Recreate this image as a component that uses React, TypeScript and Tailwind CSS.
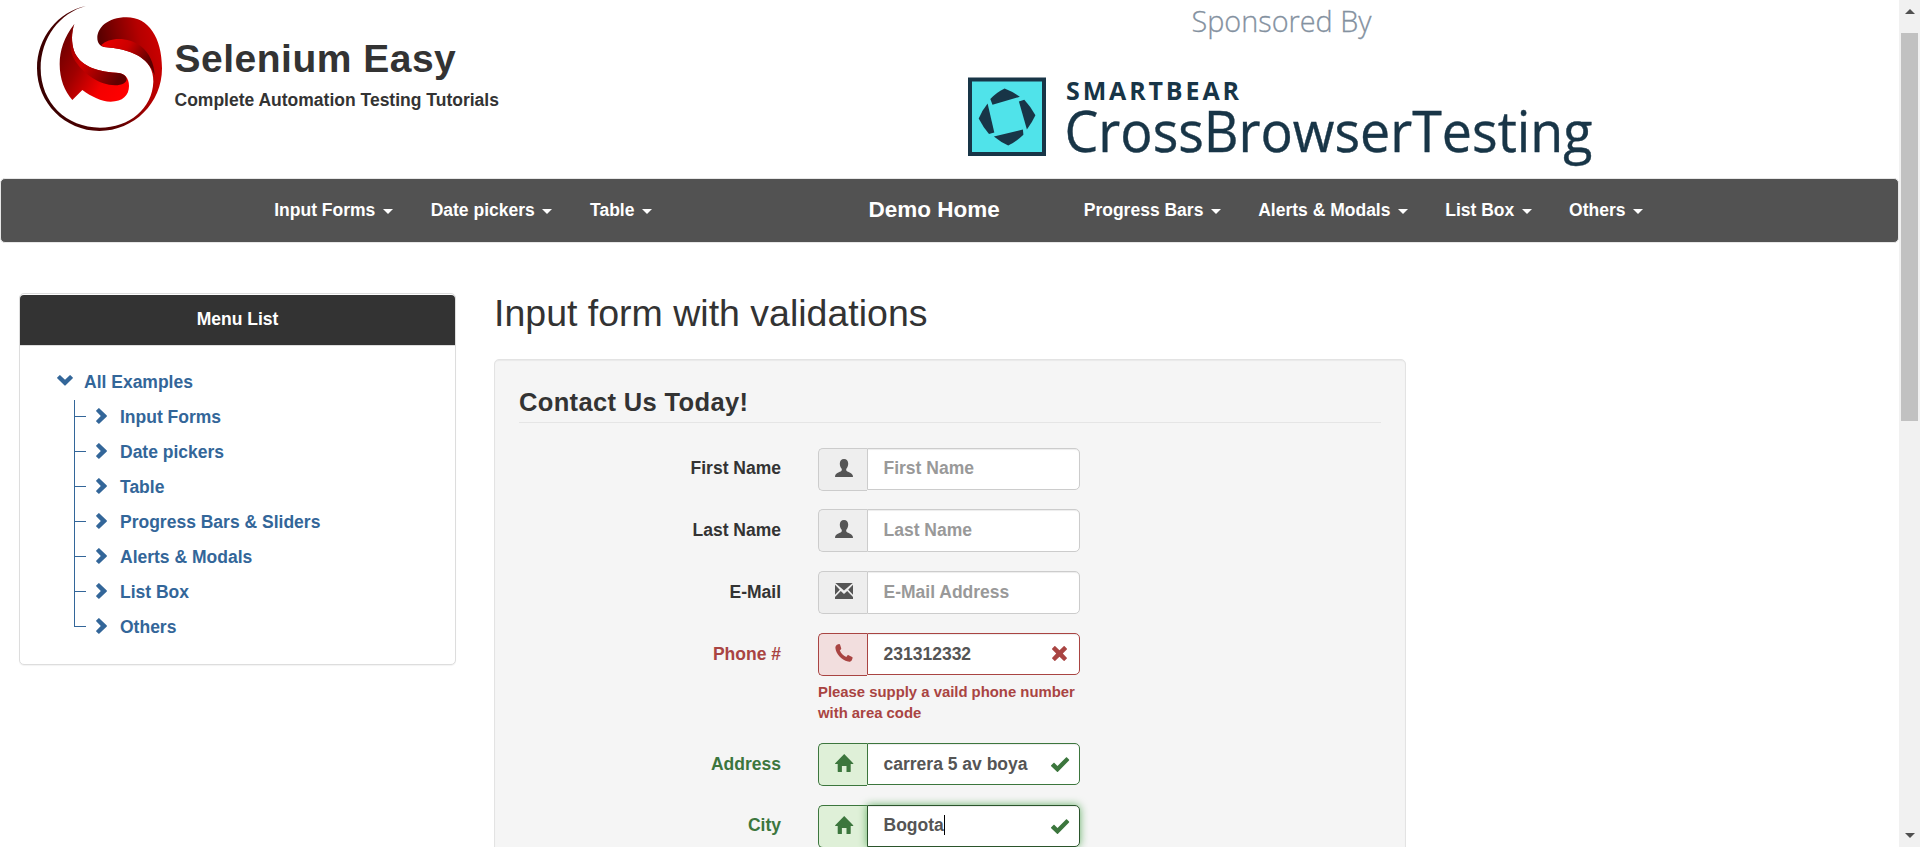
import React from "react";

type Tone = "default" | "error" | "success" | "focus";

function Glyph({ name, className = "" }: { name: string; className?: string }) {
  const paths: Record<string, React.ReactNode> = {
    user: <path d="M9 0C6.400 0 4.800 1.800 4.800 4.600c0 2 .6 3.800 1.700 4.900.5.7.4 2-.2 2.500C5 13 .6 14.200.2 16.500L0 18h18l-.2-1.500C17.400 14.200 13 13 11.700 12c-.6-.5-.7-1.800-.2-2.500 1.100-1.100 1.700-2.900 1.700-4.900C13.200 1.800 11.600 0 9 0z" />,
    mail: <path d="M.3 1h17.400L9 8.600zM0 2.800l4.800 5L0 12.800zM18 2.800v10l-4.800-5zM5.800 8.900L9 12l3.200-3.100L18 15v2H0v-2z" />,
    phone: <path d="M2.500.6L4 .1c.5-.1.9.1 1.100.6l1.100 3.500c.1.500 0 .9-.4 1.200l-1 .8c1.200 3.200 3.300 5.400 6.500 6.700l1.100-1.400c.3-.4.7-.5 1.200-.3l3.500 1.700c.5.300.7.700.5 1.200l-.6 1.600c-.7 1.700-2.300 2.300-4 1.900C6.200 16 .9 9.600.4 4.100.3 2.500 1.100 1.200 2.500.6z" />,
    home: <path d="M9.200 0l9 9.300c.3.400.2.700-.3.700h-2.200v7.600c0 .3-.1.400-.4.400h-3.800v-6H6.900v6H3.100c-.3 0-.4-.1-.4-.4V10H.5c-.5 0-.6-.3-.3-.7z" />,
    ok: <path d="M.2 9.300l2.300-2.400c.3-.3.700-.3 1 0l3 3L15 1.500c.3-.3.700-.3 1 0l2 2.100c.3.300.3.600 0 .9L7 15.700c-.3.300-.7.300-1 0L.2 10.300c-.3-.3-.3-.7 0-1z" />,
    remove: <path d="M4.300.3L8.500 4.300 12.700.3c.3-.3.600-.3.900 0l2.200 2.200c.3.300.3.600 0 .9L11.800 7.500l4 4.200c.3.300.3.600 0 .9l-2.200 2.200c-.3.300-.6.300-.9 0L8.500 10.800l-4.200 4c-.3.300-.6.300-.9 0L1.200 12.600c-.3-.3-.3-.6 0-.9l4-4.200L1.200 3.400c-.3-.3-.3-.6 0-.9L3.400.3c.3-.3.600-.3.900 0z" />,
    down: <path d="M2.600.2c.2-.2.400-.2.600 0L8 4.800 12.800.2c.2-.2.400-.2.600 0l2.400 2.400c.2.200.2.400 0 .6L8.400 10.500c-.2.200-.6.200-.8 0L.2 3.200c-.2-.2-.2-.4 0-.6z" />,
    right: <path d="M.2 13.400c-.2-.2-.2-.4 0-.6L4.800 8 .2 3.200c-.2-.2-.2-.4 0-.6L2.600.2c.2-.2.400-.2.600 0l7.600 7.400c.2.200.2.600 0 .8l-7.600 7.400c-.2.200-.4.200-.6 0z" />,
  };
  return (
    <svg className={`h-[18px] w-[19px] shrink-0 overflow-visible ${className}`} viewBox="0 0 19 18" fill="currentColor">
      {paths[name]}
    </svg>
  );
}

function SeleniumLogo() {
  return (
    <svg className="h-[140px] w-[150px] shrink-0" viewBox="0 0 450 420">
      <defs>
        <linearGradient id="ring" x1="0" y1="0.3" x2="1" y2="0.1">
          <stop offset="0" stopColor="#3a0000" />
          <stop offset="0.5" stopColor="#5c0000" />
          <stop offset="0.8" stopColor="#b50000" />
          <stop offset="1" stopColor="#d40000" />
        </linearGradient>
        <linearGradient id="fold" x1="0" y1="0" x2="1" y2="0.4">
          <stop offset="0" stopColor="#ee0000" />
          <stop offset="0.5" stopColor="#cc0000" />
          <stop offset="1" stopColor="#5a0000" />
        </linearGradient>
        <linearGradient id="tail" x1="0" y1="0.2" x2="1" y2="0.8">
          <stop offset="0" stopColor="#6a0000" />
          <stop offset="0.35" stopColor="#a00000" />
          <stop offset="0.7" stopColor="#f40000" />
          <stop offset="1" stopColor="#ff0000" />
        </linearGradient>
        <linearGradient id="tailTop" x1="0" y1="0" x2="1" y2="0.7">
          <stop offset="0" stopColor="#8a0000" />
          <stop offset="0.45" stopColor="#d00000" />
          <stop offset="1" stopColor="#600000" />
        </linearGradient>
      </defs>
      <path fill="url(#ring)" d="M198 18C114 35 51 112 51 205C51 309 135 393 238 393C342 393 426 309 426 205C426 112 385 52 320 52C262 52 232 84 232 114C232 128 240 139 252 141C330 146 402 172 400 245C397 325 328 383 240 383C140 383 62 309 62 205C62 114 120 38 198 18Z" />
      <path fill="url(#fold)" d="M243 136C268 110 325 110 362 138C388 158 402 190 404 226C386 172 330 146 252 141Z" />
      <path fill="url(#tail)" d="M163 72C132 112 119 152 119 192C119 238 134 274 157 300L187 270C215 290 244 305 272 305C308 305 327 286 327 258C327 232 314 219 288 218C226 214 178 196 162 152C154 128 154 98 163 72Z" />
      <path fill="url(#tailTop)" d="M163 72C148 105 144 150 166 184C192 222 238 256 285 256C307 256 320 248 320 237C317 224 306 219 288 218C226 214 178 196 162 152C154 128 154 98 163 72Z" />
    </svg>
  );
}

function SponsorLogo() {
  return (
    <svg className="h-[178px] w-[640px] shrink-0" viewBox="960 0 640 178" fontFamily="'Open Sans', sans-serif">
      <text x="1191.500" y="31.500" fontSize="30" fontWeight="300" fill="#84919f" stroke="#84919f" strokeWidth="0.3" textLength="180" lengthAdjust="spacingAndGlyphs">Sponsored By</text>
      <rect x="970" y="79.500" width="74" height="74.500" fill="#50e3ea" stroke="#183547" strokeWidth="4" />
      <g transform="translate(968 77.500)" fill="#183547">
        <path d="M22.300 21.500Q29 14.500 36.600 11Q44.500 14 51.800 19.300L24.500 27.300Z" />
        <path d="M50.900 24L56.300 22.300Q63 29.500 67.400 37.700Q64 45 58.900 52Z" />
        <path d="M54.900 52L55.400 57.300Q48.500 64 40.200 68Q32.500 64.500 25.900 59Z" />
        <path d="M19.600 26Q14 33 10.700 41Q15 49.500 21 56.500L26.300 55Z" />
      </g>
      <text x="1066" y="99.500" fontSize="25" fontWeight="700" fill="#183547" textLength="173" lengthAdjust="spacing">SMARTBEAR</text>
      <text x="1064.500" y="152" fontSize="56" fontWeight="400" fill="#183547" stroke="#183547" strokeWidth="0.4" textLength="528" lengthAdjust="spacingAndGlyphs">CrossBrowserTesting</text>
    </svg>
  );
}

function NavItem({ label }: { label: string }) {
  return (
    <li className="flex items-center px-[18.75px]">
      {label}
      <span className="ml-[7.300px] mt-[3px] h-0 w-0 border-x-[5px] border-t-[5px] border-x-transparent border-t-white" />
    </li>
  );
}

const examples = ["Input Forms", "Date pickers", "Table", "Progress Bars & Sliders", "Alerts & Modals", "List Box", "Others"];

function MenuPanel() {
  return (
    <aside className="mt-[50px] h-[372px] w-[437px] shrink-0 rounded-[5px] border border-[#ddd] bg-white pt-px shadow-[0_1px_1px_rgba(0,0,0,0.05)]">
      <div className="h-[51px] rounded-t-[4px] border-b border-[#ddd] bg-[#333] text-center leading-[49px] text-white">Menu List</div>
      <div className="pt-[19px] text-[#336699]">
        <div className="flex h-[35px] items-center pl-[37px]">
          <Glyph name="down" className="mt-[3px]" />
          <span className="ml-[8px]">All Examples</span>
        </div>
        <ul className="ml-[54px]">
          {examples.map((label, i) => (
            <li key={label} className="flex h-[35px]">
              <span className={i === examples.length - 1 ? "h-[17px] w-px bg-[#336699]" : "h-[35px] w-px bg-[#336699]"} />
              <span className="mt-4 h-px w-[11px] bg-[#336699]" />
              <Glyph name="right" className="ml-[10px] mt-[8px]" />
              <span className="ml-[5px] leading-[35px]">{label}</span>
            </li>
          ))}
        </ul>
      </div>
    </aside>
  );
}

const labelTone: Record<Tone, string> = { default: "text-[#333]", error: "text-[#a94442]", success: "text-[#3c763d]", focus: "text-[#3c763d]" };
const addonTone: Record<Tone, string> = {
  default: "border-[#ccc] bg-[#eee] text-[#555]",
  error: "border-[#a94442] bg-[#f2dede] text-[#a94442]",
  success: "border-[#3c763d] bg-[#dff0d8] text-[#3c763d]",
  focus: "border-[#3c763d] bg-[#dff0d8] text-[#3c763d]",
};
const inputTone: Record<Tone, string> = {
  default: "border-[#ccc] text-[#999] shadow-[inset_0_1px_1px_rgba(0,0,0,0.075)]",
  error: "border-[#a94442] text-[#555] shadow-[inset_0_1px_1px_rgba(0,0,0,0.075)]",
  success: "border-[#3c763d] text-[#555] shadow-[inset_0_1px_1px_rgba(0,0,0,0.075)]",
  focus: "border-[#2b542c] text-[#555] shadow-[inset_0_1px_1px_rgba(0,0,0,0.075),0_0_8px_#67b168]",
};

interface FieldProps {
  label: string;
  icon: string;
  text: string;
  tone?: Tone;
  help?: string;
  height: string;
  leading?: string;
  inputHeight?: string;
}

function Field({ label, icon, text, tone = "default", help, height, leading = "leading-[40px]", inputHeight = "h-[42px]" }: FieldProps) {
  const mark = tone === "default" ? null : tone === "error" ? "remove" : "ok";
  return (
    <div className={`flex ${height}`}>
      <div className={`w-[262px] text-right ${leading} ${labelTone[tone]}`}>{label}</div>
      <div className="ml-[37px] w-[262px]">
        <div className="flex">
          <div className={`flex h-[43px] w-[49px] shrink-0 justify-center rounded-l-[5px] border border-r-0 pl-[2px] pt-[10px] ${addonTone[tone]}`}>
            <Glyph name={icon} />
          </div>
          <div className={`flex w-[213px] rounded-r-[5px] border bg-white pl-[15.500px] ${inputHeight} ${inputTone[tone]}`}>
            <div className={`-mt-px flex w-[146px] items-start whitespace-nowrap ${leading}`}>
              {text}
              {tone === "focus" && <span className="mt-[10px] h-5 w-px bg-black" />}
            </div>
            {mark && <Glyph name={mark} className={`ml-[21.500px] mt-[11.500px] ${labelTone[tone]}`} />}
          </div>
        </div>
        {help && <p className="mt-[6px] text-[14.875px] leading-[21px] text-[#a94442]">{help}</p>}
      </div>
    </div>
  );
}

export default function App() {
  return (
    <div className="flex h-[847px] w-[1920px] overflow-hidden bg-white font-['Liberation_Sans',Arial,sans-serif] text-[17.5px] font-bold text-[#333]">
      <div className="w-[1899px] shrink-0">
        <header className="flex h-[178px] pl-5">
          <SeleniumLogo />
          <div className="w-[790px] pl-[4.500px] pt-[36px]">
            <h1 className="text-[39px] leading-[46px] tracking-[0.5px]">Selenium Easy</h1>
            <p className="mt-[6px] leading-[25px]">Complete Automation Testing Tutorials</p>
          </div>
          <SponsorLogo />
        </header>
        <nav className="flex h-[65px] rounded-[5px] border border-[#e7e7e7] bg-[#525252] pb-px text-white">
          <ul className="ml-[254.500px] flex w-[613px] gap-[0.500px]">
            <NavItem label="Input Forms" />
            <NavItem label="Date pickers" />
            <NavItem label="Table" />
          </ul>
          <div className="flex w-[196.500px] items-center text-[22.5px]">Demo Home</div>
          <ul className="flex">
            <NavItem label="Progress Bars" />
            <NavItem label="Alerts & Modals" />
            <NavItem label="List Box" />
            <NavItem label="Others" />
          </ul>
        </nav>
        <div className="flex items-start pl-[19px]">
          <MenuPanel />
          <main className="ml-[38px] w-[912px]">
            <h2 className="mt-[49px] h-[67px] text-[37.5px] font-normal leading-[42px]">Input form with validations</h2>
            <section className="h-[520px] rounded-[5px] border border-[#e3e3e3] bg-[#f5f5f5] px-6 pt-[24px] shadow-[inset_0_1px_1px_rgba(0,0,0,0.05)]">
              <h3 className="h-[39px] border-b border-[#e5e5e5] text-[25.5px] leading-[37px] tracking-[0.350px]">Contact Us Today!</h3>
              <div className="pt-[25px]">
                <Field label="First Name" icon="user" text="First Name" height="h-[61px]" />
                <Field label="Last Name" icon="user" text="Last Name" height="h-[62px]" leading="leading-[42px]" inputHeight="h-[43px]" />
                <Field label="E-Mail" icon="mail" text="E-Mail Address" height="h-[62px]" leading="leading-[42px]" inputHeight="h-[43px]" />
                <Field label="Phone #" icon="phone" text="231312332" tone="error" help="Please supply a vaild phone number with area code" height="h-[110px]" leading="leading-[42px]" />
                <Field label="Address" icon="home" text="carrera 5 av boya" tone="success" height="h-[62px]" leading="leading-[42px]" />
                <Field label="City" icon="home" text="Bogota" tone="focus" height="h-[62px]" />
              </div>
            </section>
          </main>
        </div>
      </div>
      <div className="flex w-[21px] flex-col items-center bg-[#f1f1f1]">
        <span className="mt-[9px] h-0 w-0 border-x-[5px] border-b-[5px] border-x-transparent border-b-[#505050]" />
        <span className="mt-[19px] h-[388px] w-[17px] bg-[#c1c1c1]" />
        <span className="mb-[9px] mt-auto h-0 w-0 border-x-[5px] border-t-[5px] border-x-transparent border-t-[#505050]" />
      </div>
    </div>
  );
}
